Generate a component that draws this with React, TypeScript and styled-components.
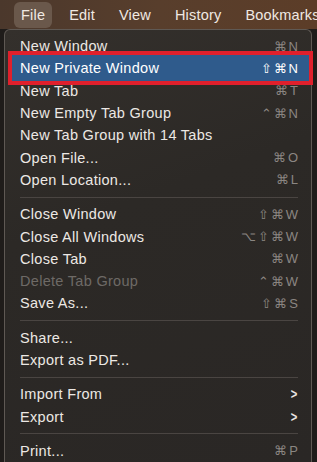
import React from 'react';
import styled, { createGlobalStyle } from 'styled-components';

const GlobalStyle = createGlobalStyle`
  html, body {
    margin: 0;
    padding: 0;
    background: #1f1c1a;
  }
  body {
    width: 317px;
    height: 462px;
    overflow: hidden;
    font-family: "Liberation Sans", Arial, sans-serif;
  }
`;

const Screen = styled.div`
  width: 317px;
  height: 462px;
  display: flex;
  flex-direction: column;
  background: #1f1c1a;
  overflow: hidden;
`;

const MenuBar = styled.div`
  height: 29px;
  flex-shrink: 0;
  display: flex;
  align-items: center;
  padding-left: 14px;
  gap: 10px;
  background: linear-gradient(90deg, #4b382c 0%, #583e2c 50%, #5c3d28 100%);
  white-space: nowrap;
  overflow: hidden;
`;

const BarItem = styled.div<{ active?: boolean }>`
  padding: 5px 7px 5px;
  border-radius: 6px;
  font-size: 14.5px;
  letter-spacing: 0.2px;
  color: #f0e9e2;
  background: ${({ active }) => (active ? '#6a584b' : 'transparent')};
`;

const Panel = styled.div`
  flex: 1;
  min-height: 0;
  margin: 0 5px 0 4px;
  border: 1px solid #5f5954;
  border-bottom: none;
  border-radius: 6px 6px 0 0;
  background: linear-gradient(160deg, #34302c 0%, #2c2926 40%, #2a2725 100%);
  padding: 5px 0 0;
  display: flex;
  flex-direction: column;
`;

const Row = styled.div<{ selected?: boolean; disabled?: boolean }>`
  height: 22.3px;
  flex-shrink: 0;
  display: flex;
  align-items: center;
  justify-content: space-between;
  padding: 0 13px 0 15px;
  font-size: 14.5px;
  letter-spacing: 0.3px;
  color: ${({ disabled }) => (disabled ? '#6e6a66' : '#ece8e4')};
  box-sizing: border-box;
  ${({ selected }) =>
    selected &&
    `
    height: 34px;
    margin: -5.85px -2px -5.85px 3px;
    padding: 0 11px 0 8px;
    background: #2f5b8c;
    border: 4px solid #e0202c;
    color: #ffffff;
    position: relative;
    z-index: 1;
  `}
`;

const Shortcut = styled.span<{ selected?: boolean }>`
  font-size: 13px;
  color: ${({ selected }) => (selected ? '#ffffff' : '#8b8682')};
  letter-spacing: 2px;
  margin-right: -2px;
`;

const Chevron = styled.span`
  color: #ece8e4;
  font-size: 14px;
  font-weight: 700;
  transform: scaleX(0.8);
`;

const Separator = styled.div`
  height: 1px;
  flex-shrink: 0;
  margin: 5.5px 13px 5.5px 15px;
  background: #4a4542;
`;

type Item = {
  label: string;
  keys?: string;
  selected?: boolean;
  disabled?: boolean;
  submenu?: boolean;
};

const groups: Item[][] = [
  [
    { label: 'New Window', keys: '⌘N' },
    { label: 'New Private Window', keys: '⇧⌘N', selected: true },
    { label: 'New Tab', keys: '⌘T' },
    { label: 'New Empty Tab Group', keys: '⌃⌘N' },
    { label: 'New Tab Group with 14 Tabs' },
    { label: 'Open File...', keys: '⌘O' },
    { label: 'Open Location...', keys: '⌘L' },
  ],
  [
    { label: 'Close Window', keys: '⇧⌘W' },
    { label: 'Close All Windows', keys: '⌥⇧⌘W' },
    { label: 'Close Tab', keys: '⌘W' },
    { label: 'Delete Tab Group', keys: '⌃⌘W', disabled: true },
    { label: 'Save As...', keys: '⇧⌘S' },
  ],
  [{ label: 'Share...' }, { label: 'Export as PDF...' }],
  [
    { label: 'Import From', submenu: true },
    { label: 'Export', submenu: true },
  ],
  [{ label: 'Print...', keys: '⌘P' }],
];

const App: React.FC = () => (
  <>
    <GlobalStyle />
    <Screen>
      <MenuBar>
        <BarItem active>File</BarItem>
        <BarItem>Edit</BarItem>
        <BarItem>View</BarItem>
        <BarItem>History</BarItem>
        <BarItem>Bookmarks</BarItem>
      </MenuBar>
      <Panel>
        {groups.map((group, gi) => (
          <React.Fragment key={gi}>
            {gi > 0 && <Separator />}
            {group.map((item) => (
              <Row key={item.label} selected={item.selected} disabled={item.disabled}>
                <span>{item.label}</span>
                {item.keys && <Shortcut selected={item.selected}>{item.keys}</Shortcut>}
                {item.submenu && <Chevron>&gt;</Chevron>}
              </Row>
            ))}
          </React.Fragment>
        ))}
      </Panel>
    </Screen>
  </>
);

export default App;
